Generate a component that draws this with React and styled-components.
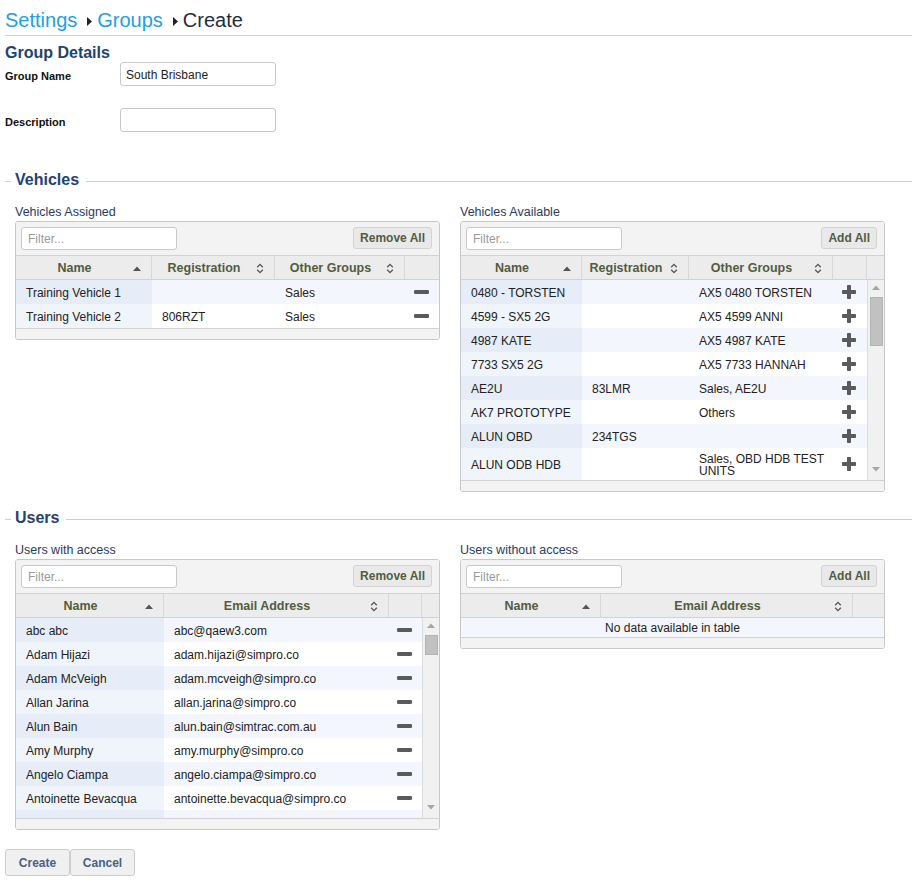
import React from 'react';
import styled, { createGlobalStyle } from 'styled-components';

const GlobalStyle = createGlobalStyle`
    * {
        box-sizing: border-box;
    }
    body {
        margin: 0;
        background: #fff;
        font-family: "Liberation Sans", Arial, sans-serif;
        color: #222;
    }
`;

const COLORS = {
    header: '#525c3e',
    border: '#c8c8c8',
    inner: '#d2d2d2',
    bar: '#f3f3f3',
    odd: '#f3f6fd',
    oddSorted: '#e6edf8',
    even: '#ffffff',
    evenSorted: '#f0f4fb',
};

const Page = styled.div`
    padding: 0 0 11px 5px;
`;

const Breadcrumb = styled.div`
    display: flex;
    align-items: center;
    padding-top: 9px;
    font-size: 20px;
    line-height: 23px;
`;

const Crumb = styled.span`
    color: ${(p) => (p.$current ? '#1e2d3d' : '#23a0dd')};
`;

const Caret = styled.svg`
    width: 5px;
    height: 9px;
    margin: 1px 5px 0 10px;
    fill: #222;
`;

const Rule = styled.div`
    height: 1px;
    margin-top: 3px;
    background: #cfcfcf;
`;

const PageTitle = styled.h2`
    margin: 8px 0 0;
    font-size: 16px;
    line-height: 18px;
    font-weight: bold;
    color: #1c4473;
`;

const FormRow = styled.div`
    display: grid;
    grid-template-columns: 115px 156px;
    align-items: center;
    height: 24px;
    margin-top: ${(p) => p.$gap || 0}px;
`;

const FieldLabel = styled.label`
    font-size: 11px;
    font-weight: bold;
    color: #111;
    padding-top: 3px;
`;

const TextInput = styled.input`
    width: 156px;
    height: 24px;
    border: 1px solid #c9c9c9;
    border-radius: 3px;
    padding: 1px 5px 0;
    font-family: inherit;
    font-size: 12px;
    color: #222;
`;

const Section = styled.section`
    margin-top: ${(p) => p.$top}px;
`;

const SectionTitle = styled.div`
    display: flex;
    align-items: center;
    padding-top: 1px;
    font-size: 16px;
    line-height: 18px;
    font-weight: bold;
    color: #1c4473;

    &::before,
    &::after {
        content: '';
        height: 1px;
        margin-top: 2px;
        background: #cfcfcf;
    }
    &::before {
        width: 6px;
        margin-right: 4px;
    }
    &::after {
        flex: 1;
        margin-left: 7px;
    }
`;

const SectionBody = styled.div`
    display: grid;
    grid-template-columns: 425px 425px;
    column-gap: 20px;
    align-items: start;
    padding: 15px 0 0 10px;
`;

const PanelLabel = styled.div`
    font-size: 12.5px;
    line-height: 15px;
    padding-top: 1px;
    color: #2a3b62;
    margin-bottom: 1px;
`;

const TableBox = styled.div`
    border: 1px solid ${COLORS.border};
    border-radius: 3px;
    overflow: hidden;
    background: #fff;
`;

const Toolbar = styled.div`
    display: flex;
    justify-content: space-between;
    align-items: flex-start;
    height: 34px;
    padding: 5px 7px 0 5px;
    background: ${COLORS.bar};
    border-bottom: 1px solid ${COLORS.inner};
`;

const FilterInput = styled.input`
    width: 156px;
    height: 23px;
    border: 1px solid #c9c9c9;
    border-radius: 3px;
    padding: 1px 6px 0;
    font-family: inherit;
    font-size: 12px;

    &::placeholder {
        color: #9a9a9a;
    }
`;

const ToolButton = styled.button`
    height: 22px;
    padding: 0 6px;
    background: #e9e9e9;
    border: 1px solid #d3d3d3;
    border-radius: 3px;
    font-family: inherit;
    font-size: 12px;
    font-weight: bold;
    color: ${COLORS.header};
`;

const HeaderRow = styled.div`
    display: flex;
    height: 24px;
    background: #ececec;
    border-bottom: 1px solid ${COLORS.inner};
`;

const HeaderGrid = styled.div`
    flex: 1;
    display: grid;
    grid-template-columns: ${(p) => p.$template};
`;

const HeaderCell = styled.div`
    display: flex;
    align-items: center;
    padding-top: 1px;
    border-right: 1px solid #d8d8d8;
    font-size: 12.5px;
    font-weight: bold;
    color: ${COLORS.header};

    &:last-child {
        border-right: ${(p) => (p.$gutter ? '1px solid #d8d8d8' : 'none')};
    }
`;

const HeaderText = styled.span`
    flex: 1;
    text-align: center;
`;

const SortIcon = styled.svg`
    flex: none;
    margin-right: 10px;
`;

const Gutter = styled.div`
    width: 17px;
`;

const Body = styled.div`
    display: flex;
    height: ${(p) => (p.$height ? `${p.$height}px` : 'auto')};
`;

const Rows = styled.div`
    flex: 1;
    overflow: hidden;
`;

const Row = styled.div`
    display: grid;
    grid-template-columns: ${(p) => p.$template};
    min-height: 24px;
    background: ${(p) => (p.$odd ? COLORS.odd : COLORS.even)};
`;

const Cell = styled.div`
    display: flex;
    align-items: center;
    padding: 5px 9px 3px 10px;
    font-size: 12px;
    line-height: 12px;
    color: #222;
    background: ${(p) => (p.$sorted ? (p.$odd ? COLORS.oddSorted : COLORS.evenSorted) : 'transparent')};
`;

const ActionCell = styled.div`
    display: flex;
    align-items: center;
    justify-content: center;
    padding-right: 2px;
`;

const EmptyRow = styled.div`
    height: 19px;
    padding-top: 1px;
    line-height: 18px;
    text-align: center;
    font-size: 12px;
    background: ${COLORS.odd};
`;

const Scrollbar = styled.div`
    width: 17px;
    display: flex;
    flex-direction: column;
    align-items: center;
    background: #f1f1f1;
    border-left: 1px solid #dcdcdc;
`;

const ScrollArrow = styled.div`
    height: 14px;
    display: flex;
    align-items: center;
    justify-content: center;
    margin-top: ${(p) => (p.$down ? 'auto' : '0')};
    margin-bottom: ${(p) => (p.$down ? '4px' : '0')};
`;

const Thumb = styled.div`
    width: 13px;
    background: #c1c1c1;
    border: 1px solid #b4b4b4;
`;

const Footer = styled.div`
    height: 11px;
    background: ${COLORS.bar};
    border-top: 1px solid ${COLORS.inner};
`;

const ButtonBar = styled.div`
    display: flex;
    margin-top: 19px;
`;

const FormButton = styled.button`
    width: 65px;
    height: 27px;
    padding: 0;
    background: #f0f0f0;
    border: 1px solid #cdcdcd;
    border-radius: 3px;
    font-family: inherit;
    font-size: 12px;
    font-weight: bold;
    color: #4a6282;
`;

const AscIcon = () => (
    <SortIcon width="8" height="5" viewBox="0 0 8 5">
        <polygon points="0,5 4,0.5 8,5" fill="#555" />
    </SortIcon>
);

const BothIcon = () => (
    <SortIcon width="8" height="11" viewBox="0 0 8 11">
        <polyline points="1.2,4.2 4,1.4 6.8,4.2" fill="none" stroke="#555" strokeWidth="1.3" />
        <polyline points="1.2,6.8 4,9.6 6.8,6.8" fill="none" stroke="#555" strokeWidth="1.3" />
    </SortIcon>
);

const MinusIcon = () => (
    <svg width="15" height="4" viewBox="0 0 15 4">
        <rect x="0" y="0" width="15" height="4" rx="1.2" fill="#5a5a5a" />
    </svg>
);

const PlusIcon = () => (
    <svg width="14" height="14" viewBox="0 0 14 14">
        <rect x="0" y="5" width="14" height="4" rx="0.8" fill="#5a5a5a" />
        <rect x="5" y="0" width="4" height="14" rx="0.8" fill="#5a5a5a" />
    </svg>
);

const Arrow = ({ down }) => (
    <svg width="8" height="5" viewBox="0 0 8 5">
        <polygon points={down ? '0,0 8,0 4,4.5' : '0,5 8,5 4,0.5'} fill="#a6a6a6" />
    </svg>
);

const DataTable = ({ columns, rows, action, button, scroll, emptyText }) => {
    const widths = columns.map((c) => `${c.width}px`).join(' ');
    const template = `${widths} 1fr`;

    return (
        <TableBox>
            <Toolbar>
                <FilterInput placeholder="Filter..." />
                <ToolButton>{button}</ToolButton>
            </Toolbar>
            <HeaderRow>
                <HeaderGrid $template={template}>
                    {columns.map((col) => (
                        <HeaderCell key={col.label}>
                            <HeaderText>{col.label}</HeaderText>
                            {col.sort === 'asc' ? <AscIcon /> : <BothIcon />}
                        </HeaderCell>
                    ))}
                    <HeaderCell $gutter={!!scroll} />
                </HeaderGrid>
                {scroll && <Gutter />}
            </HeaderRow>
            <Body $height={scroll ? scroll.height : null}>
                <Rows>
                    {rows.length === 0 && <EmptyRow>{emptyText}</EmptyRow>}
                    {rows.map((row, i) => {
                        const odd = i % 2 === 0;
                        return (
                            <Row key={row[0]} $template={template} $odd={odd}>
                                {row.map((value, j) => (
                                    <Cell key={j} $sorted={j === 0} $odd={odd}>
                                        {value}
                                    </Cell>
                                ))}
                                <ActionCell>{action === 'plus' ? <PlusIcon /> : <MinusIcon />}</ActionCell>
                            </Row>
                        );
                    })}
                </Rows>
                {scroll && (
                    <Scrollbar>
                        <ScrollArrow>
                            <Arrow />
                        </ScrollArrow>
                        <Thumb style={{ marginTop: scroll.thumbTop, height: scroll.thumbHeight }} />
                        <ScrollArrow $down>
                            <Arrow down />
                        </ScrollArrow>
                    </Scrollbar>
                )}
            </Body>
            <Footer />
        </TableBox>
    );
};

const VEHICLE_COLUMNS_ASSIGNED = [
    { label: 'Name', width: 136, sort: 'asc' },
    { label: 'Registration', width: 123, sort: 'both' },
    { label: 'Other Groups', width: 130, sort: 'both' },
];

const VEHICLE_COLUMNS_AVAILABLE = [
    { label: 'Name', width: 121, sort: 'asc' },
    { label: 'Registration', width: 107, sort: 'both' },
    { label: 'Other Groups', width: 144, sort: 'both' },
];

const USER_COLUMNS_WITH = [
    { label: 'Name', width: 148, sort: 'asc' },
    { label: 'Email Address', width: 225, sort: 'both' },
];

const USER_COLUMNS_WITHOUT = [
    { label: 'Name', width: 140, sort: 'asc' },
    { label: 'Email Address', width: 252, sort: 'both' },
];

const VEHICLES_ASSIGNED = [
    ['Training Vehicle 1', '', 'Sales'],
    ['Training Vehicle 2', '806RZT', 'Sales'],
];

const VEHICLES_AVAILABLE = [
    ['0480 - TORSTEN', '', 'AX5 0480 TORSTEN'],
    ['4599 - SX5 2G', '', 'AX5 4599 ANNI'],
    ['4987 KATE', '', 'AX5 4987 KATE'],
    ['7733 SX5 2G', '', 'AX5 7733 HANNAH'],
    ['AE2U', '83LMR', 'Sales, AE2U'],
    ['AK7 PROTOTYPE', '', 'Others'],
    ['ALUN OBD', '234TGS', ''],
    ['ALUN ODB HDB', '', 'Sales, OBD HDB TEST UNITS'],
];

const USERS_WITH = [
    ['abc abc', 'abc@qaew3.com'],
    ['Adam Hijazi', 'adam.hijazi@simpro.co'],
    ['Adam McVeigh', 'adam.mcveigh@simpro.co'],
    ['Allan Jarina', 'allan.jarina@simpro.co'],
    ['Alun Bain', 'alun.bain@simtrac.com.au'],
    ['Amy Murphy', 'amy.murphy@simpro.co'],
    ['Angelo Ciampa', 'angelo.ciampa@simpro.co'],
    ['Antoinette Bevacqua', 'antoinette.bevacqua@simpro.co'],
    ['Arthur Bailey', 'arthur.bailey@simpro.co'],
];

const App = () => (
    <Page>
        <GlobalStyle />
        <Breadcrumb>
            <Crumb>Settings</Crumb>
            <Caret viewBox="0 0 5 9">
                <polygon points="0,0 5,4.5 0,9" />
            </Caret>
            <Crumb>Groups</Crumb>
            <Caret viewBox="0 0 5 9">
                <polygon points="0,0 5,4.5 0,9" />
            </Caret>
            <Crumb $current>Create</Crumb>
        </Breadcrumb>
        <Rule />

        <PageTitle>Group Details</PageTitle>
        <FormRow>
            <FieldLabel>Group Name</FieldLabel>
            <TextInput defaultValue="South Brisbane" />
        </FormRow>
        <FormRow $gap={22}>
            <FieldLabel>Description</FieldLabel>
            <TextInput />
        </FormRow>

        <Section $top={38}>
            <SectionTitle>Vehicles</SectionTitle>
            <SectionBody>
                <div>
                    <PanelLabel>Vehicles Assigned</PanelLabel>
                    <DataTable
                        columns={VEHICLE_COLUMNS_ASSIGNED}
                        rows={VEHICLES_ASSIGNED}
                        action="minus"
                        button="Remove All"
                    />
                </div>
                <div>
                    <PanelLabel>Vehicles Available</PanelLabel>
                    <DataTable
                        columns={VEHICLE_COLUMNS_AVAILABLE}
                        rows={VEHICLES_AVAILABLE}
                        action="plus"
                        button="Add All"
                        scroll={{ height: 200, thumbTop: 3, thumbHeight: 49 }}
                    />
                </div>
            </SectionBody>
        </Section>

        <Section $top={16}>
            <SectionTitle>Users</SectionTitle>
            <SectionBody>
                <div>
                    <PanelLabel>Users with access</PanelLabel>
                    <DataTable
                        columns={USER_COLUMNS_WITH}
                        rows={USERS_WITH}
                        action="minus"
                        button="Remove All"
                        scroll={{ height: 200, thumbTop: 3, thumbHeight: 20 }}
                    />
                </div>
                <div>
                    <PanelLabel>Users without access</PanelLabel>
                    <DataTable
                        columns={USER_COLUMNS_WITHOUT}
                        rows={[]}
                        button="Add All"
                        emptyText="No data available in table"
                    />
                </div>
            </SectionBody>
        </Section>

        <ButtonBar>
            <FormButton>Create</FormButton>
            <FormButton>Cancel</FormButton>
        </ButtonBar>
    </Page>
);

export default App;
